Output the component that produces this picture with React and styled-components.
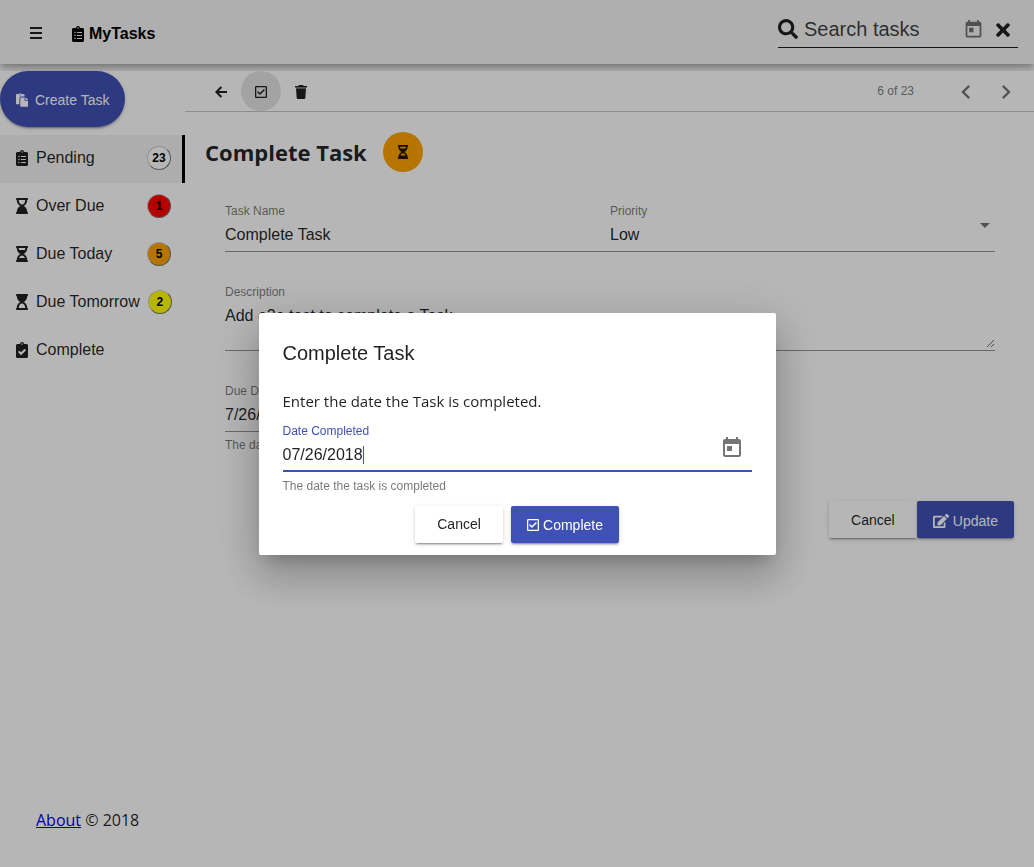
import React from "react";
import styled, { createGlobalStyle, css } from "styled-components";
import {
  FaClipboardList,
  FaClipboardCheck,
  FaHourglassEnd,
  FaHourglassHalf,
  FaHourglassStart,
  FaPaste,
  FaRegCheckSquare,
  FaSearch,
  FaTimes,
  FaEdit,
} from "react-icons/fa";
import { MdToday, MdChevronLeft, MdChevronRight } from "react-icons/md";

const sans = `"Liberation Sans", Arial, sans-serif`;
const humanist = `"Open Sans", "Noto Sans", sans-serif`;
const primary = "#3f51b5";
const ink = "rgba(0, 0, 0, 0.87)";
const muted = "rgba(0, 0, 0, 0.54)";

const GlobalStyle = createGlobalStyle`
  *, *::before, *::after { box-sizing: border-box; }
  body { margin: 0; background: #fff; color: ${ink}; font-family: ${sans}; font-size: 16px; }
  button, input, select, textarea { font-family: inherit; color: inherit; }
  svg { display: block; flex: none; }
`;

const Page = styled.div`
  display: flex;
  flex-direction: column;
  min-height: 100vh;
`;

const TopBar = styled.header`
  display: flex;
  align-items: center;
  height: 64px;
  padding: 0 16px 0 20px;
  background: #f5f5f5;
  box-shadow: 0 3px 5px -1px rgba(0, 0, 0, 0.2), 0 6px 10px rgba(0, 0, 0, 0.14),
    0 1px 18px rgba(0, 0, 0, 0.12);
`;

const IconButton = styled.button`
  display: inline-flex;
  align-items: center;
  justify-content: center;
  width: ${(p) => p.$size || 40}px;
  height: ${(p) => p.$size || 40}px;
  padding: 2px 0 0;
  border: 0;
  border-radius: 50%;
  background: ${(p) => (p.$active ? "#e5e5e5" : "transparent")};
  color: ${(p) => (p.$muted ? muted : ink)};
  cursor: pointer;
`;

const Brand = styled.div`
  display: flex;
  align-items: center;
  gap: 5px;
  margin-left: 20px;
  padding-top: 3px;
  color: #000;
  font-weight: bold;
  svg {
    width: 12px;
    height: 16px;
  }
`;

const SearchBox = styled.form`
  display: flex;
  align-items: center;
  width: 240px;
  height: 40px;
  margin: -8px 0 0 auto;
  padding: 2px 5px 0 0;
  border-bottom: 1px solid #1c1c1c;
`;

const SearchInput = styled.input`
  flex: 1;
  min-width: 0;
  margin-left: 6px;
  padding: 0;
  border: 0;
  outline: 0;
  background: transparent;
  font-size: 20px;
  line-height: 24px;
  &::placeholder {
    color: rgba(0, 0, 0, 0.75);
  }
`;

const SearchAction = styled(IconButton)`
  width: 20px;
  height: 24px;
  margin-left: ${(p) => p.$gap}px;
`;

const Body = styled.div`
  position: relative;
  display: flex;
  flex: 1;
  margin-top: 7px;
  background: #fff;
`;

const Sidebar = styled.aside`
  display: flex;
  flex-direction: column;
  width: 185px;
  flex: none;
`;

const CreateButton = styled.button`
  display: inline-flex;
  align-items: center;
  align-self: flex-start;
  gap: 7px;
  height: 56px;
  padding: 2px 16px 0;
  border: 0;
  border-radius: 28px;
  background: ${primary};
  color: #fff;
  font-size: 14px;
  font-weight: 500;
  box-shadow: 0 3px 1px -2px rgba(0, 0, 0, 0.2), 0 2px 2px rgba(0, 0, 0, 0.14),
    0 1px 5px rgba(0, 0, 0, 0.12);
  cursor: pointer;
  svg {
    width: 12px;
    height: 14px;
  }
`;

const Nav = styled.nav`
  margin-top: 8px;
`;

const NavItem = styled.a`
  display: flex;
  align-items: center;
  gap: 8px;
  height: 48px;
  padding: 0 11px 2px 16px;
  border-right: 3px solid ${(p) => (p.$active ? "#000" : "transparent")};
  background: ${(p) => (p.$active ? "#f3f3f3" : "transparent")};
  color: ${ink};
  text-decoration: none;
  white-space: nowrap;
  svg {
    width: 12px;
    height: 16px;
  }
`;

const Badge = styled.span`
  display: flex;
  align-items: center;
  justify-content: center;
  width: 24px;
  height: 24px;
  margin-left: auto;
  flex: none;
  border: 1px outset #ccc;
  border-radius: 50%;
  background: ${(p) => p.$color};
  color: #000;
  font-size: 12px;
  font-weight: bold;
`;

const Footer = styled.footer`
  margin-top: auto;
  padding: 0 0 35px 36px;
  font-family: ${humanist};
  font-size: 16px;
  line-height: 24px;
  a {
    color: #0000ee;
  }
`;

const Main = styled.main`
  flex: 1;
  min-width: 0;
`;

const Toolbar = styled.div`
  display: flex;
  align-items: center;
  height: 41px;
  padding: 0 8px 0 16px;
  border-bottom: 1px solid #c8c8c8;
`;

const Counter = styled.span`
  margin: 0 32px 0 auto;
  color: ${muted};
  font-size: 12px;
`;

const Detail = styled.section`
  padding: 20px;
`;

const TitleRow = styled.div`
  display: flex;
  align-items: center;
  gap: 16px;
  height: 40px;
  margin-bottom: 31px;
`;

const Title = styled.h1`
  margin: 0;
  font-family: ${humanist};
  font-size: 22px;
  line-height: 32px;
  font-weight: bold;
`;

const StatusDot = styled.span`
  display: flex;
  align-items: center;
  justify-content: center;
  width: 40px;
  height: 40px;
  border-radius: 50%;
  background: #ffa500;
`;

const Form = styled.form`
  display: flex;
  flex-direction: column;
  gap: 32px;
  padding: 0 19px 0 20px;
`;

const FormRow = styled.div`
  display: grid;
  grid-template-columns: 1fr 1fr;
`;

const Field = styled.div`
  display: flex;
  flex-direction: column;
  min-width: 0;
`;

const Label = styled.label`
  color: ${(p) => (p.$focused ? primary : muted)};
  font-size: 12px;
  line-height: 16px;
`;

const Line = styled.div`
  display: flex;
  align-items: center;
  padding-bottom: ${(p) => (p.$focused ? 1 : 2)}px;
  border-bottom: ${(p) => (p.$focused ? `2px solid ${primary}` : "1px solid #949494")};
`;

const controlStyle = css`
  width: 100%;
  min-width: 0;
  margin: 0;
  padding: 0;
  border: 0;
  outline: 0;
  background: transparent;
  font-size: 16px;
`;

const TextInput = styled.input`
  ${controlStyle}
  height: 30px;
  padding-top: 2px;
`;

const DateInput = styled(TextInput)`
  width: auto;
  height: 18px;
  margin: 7px 0 5px;
  padding-top: 0;
  field-sizing: content;
  border-right: 1px solid ${primary};
  caret-color: transparent;
`;

const Select = styled.select`
  ${controlStyle}
  height: 30px;
  appearance: none;
`;

const TextArea = styled.textarea`
  ${controlStyle}
  display: block;
  height: 48px;
  padding-top: 4px;
  line-height: 24px;
  resize: vertical;
  overflow: hidden;
`;

const SelectArrow = styled.svg`
  margin: -18px 5px 0 -15px;
  fill: ${muted};
  pointer-events: none;
`;

const Hint = styled.div`
  margin-top: ${(p) => p.$gap}px;
  color: ${muted};
  font-size: 12px;
  line-height: 16px;
`;

const Actions = styled.div`
  display: flex;
  justify-content: ${(p) => p.$align};
  gap: ${(p) => p.$gap}px;
  margin-top: ${(p) => p.$top}px;
`;

const Button = styled.button`
  display: inline-flex;
  align-items: center;
  justify-content: center;
  gap: 4px;
  min-width: 88px;
  height: 37px;
  padding: ${(p) => (p.$primary ? "2px 16px 0" : "0 16px")};
  border: 0;
  border-radius: 2px;
  background: ${(p) => (p.$primary ? primary : "#fff")};
  color: ${(p) => (p.$primary ? "#fff" : ink)};
  font-size: 14px;
  font-weight: 500;
  box-shadow: 0 3px 1px -2px rgba(0, 0, 0, 0.2), 0 2px 2px rgba(0, 0, 0, 0.14),
    0 1px 5px rgba(0, 0, 0, 0.12);
  cursor: pointer;
`;

const CheckIcon = styled(FaRegCheckSquare)`
  width: 12px;
  height: 14px;
`;

const Backdrop = styled.div`
  position: fixed;
  inset: 0;
  display: flex;
  align-items: center;
  justify-content: center;
  background: rgba(0, 0, 0, 0.288);
`;

const Dialog = styled.section`
  width: 50%;
  padding: 24px 24px 12px;
  border-radius: 2px;
  background: #fff;
  box-shadow: 0 11px 15px -7px rgba(0, 0, 0, 0.2), 0 24px 38px 3px rgba(0, 0, 0, 0.14),
    0 9px 46px 8px rgba(0, 0, 0, 0.12);
`;

const DialogTitle = styled.h2`
  margin: 0 0 20px;
  font-size: 20px;
  line-height: 32px;
  font-weight: normal;
`;

const DialogText = styled.p`
  margin: 0 0 10px;
  font-family: ${humanist};
  font-size: 15px;
  line-height: 24px;
`;

const PickerButton = styled(IconButton)`
  width: 24px;
  height: 24px;
  margin: -14px 8px 0 auto;
`;

const MenuIcon = () => (
  <svg width="12" height="12" viewBox="0 0 12 12" fill="currentColor">
    <path d="M0 0h12v2H0zM0 5h12v2H0zM0 10h12v2H0z" />
  </svg>
);

const BackIcon = () => (
  <svg width="12" height="12" viewBox="0 0 12 12" fill="none" stroke="currentColor" strokeWidth="2">
    <path d="M12 6H1.600M6.400 1L1.400 6l5 5" />
  </svg>
);

const TrashIcon = () => (
  <svg width="12" height="14" viewBox="0 0 12 14" fill="currentColor">
    <path d="M4 0h4l.7 1H12v1.600H0V1h3.300z" />
    <path d="M1 2.600h10v1H1z" opacity="0.5" />
    <path d="M1 3.600h10l-.7 9.400q-.1 1-1 1H2.700q-.900 0-1-1z" />
  </svg>
);

const navItems = [
  { label: "Pending", Icon: FaClipboardList, count: 23, color: "#fff", active: true },
  { label: "Over Due", Icon: FaHourglassEnd, count: 1, color: "#ff0000" },
  { label: "Due Today", Icon: FaHourglassHalf, count: 5, color: "#ffa500" },
  { label: "Due Tomorrow", Icon: FaHourglassStart, count: 2, color: "#ffff00" },
  { label: "Complete", Icon: FaClipboardCheck },
];

export default function App() {
  return (
    <>
      <GlobalStyle />
      <Page>
        <TopBar>
          <IconButton $size={32} aria-label="Menu">
            <MenuIcon />
          </IconButton>
          <Brand>
            <FaClipboardList />
            MyTasks
          </Brand>
          <SearchBox role="search">
            <FaSearch size={20} />
            <SearchInput type="text" placeholder="Search tasks" aria-label="Search tasks" />
            <SearchAction type="button" $gap={8} $muted aria-label="Pick a date">
              <MdToday size={21} />
            </SearchAction>
            <SearchAction type="button" $gap={10} aria-label="Clear search">
              <FaTimes size={20} />
            </SearchAction>
          </SearchBox>
        </TopBar>

        <Body>
          <Sidebar>
            <CreateButton type="button">
              <FaPaste />
              Create Task
            </CreateButton>
            <Nav>
              {navItems.map(({ label, Icon, count, color, active }) => (
                <NavItem key={label} href="#" $active={active}>
                  <Icon />
                  {label}
                  {count && <Badge $color={color}>{count}</Badge>}
                </NavItem>
              ))}
            </Nav>
            <Footer>
              <a href="#about">About</a> © 2018
            </Footer>
          </Sidebar>

          <Main>
            <Toolbar>
              <IconButton aria-label="Back">
                <BackIcon />
              </IconButton>
              <IconButton $active aria-label="Complete task">
                <CheckIcon />
              </IconButton>
              <IconButton aria-label="Delete task">
                <TrashIcon />
              </IconButton>
              <Counter>6 of 23</Counter>
              <IconButton $muted aria-label="Previous task">
                <MdChevronLeft size={28} />
              </IconButton>
              <IconButton $muted aria-label="Next task">
                <MdChevronRight size={28} />
              </IconButton>
            </Toolbar>

            <Detail>
              <TitleRow>
                <Title>Complete Task</Title>
                <StatusDot>
                  <FaHourglassHalf size={14} />
                </StatusDot>
              </TitleRow>
              <Form>
                <FormRow>
                  <Field>
                    <Label htmlFor="name">Task Name</Label>
                    <Line>
                      <TextInput id="name" defaultValue="Complete Task" />
                    </Line>
                  </Field>
                  <Field>
                    <Label htmlFor="priority">Priority</Label>
                    <Line>
                      <Select id="priority" defaultValue="Low">
                        <option>Low</option>
                        <option>Normal</option>
                        <option>High</option>
                      </Select>
                      <SelectArrow width="10" height="5" viewBox="0 0 10 5">
                        <path d="M0 0h10L5 5z" />
                      </SelectArrow>
                    </Line>
                  </Field>
                </FormRow>
                <Field>
                  <Label htmlFor="description">Description</Label>
                  <Line>
                    <TextArea id="description" defaultValue="Add e2e test to complete a Task" />
                  </Line>
                </Field>
                <FormRow>
                  <Field>
                    <Label htmlFor="due">Due Date</Label>
                    <Line>
                      <TextInput id="due" defaultValue="7/26/2018" />
                    </Line>
                    <Hint $gap={5}>The date the task is due</Hint>
                  </Field>
                </FormRow>
              </Form>
              <Actions $align="flex-end" $gap={0} $top={48}>
                <Button type="button">Cancel</Button>
                <Button type="button" $primary>
                  <FaEdit size={16} />
                  Update
                </Button>
              </Actions>
            </Detail>
          </Main>
        </Body>
      </Page>

      <Backdrop>
        <Dialog role="dialog" aria-modal="true" aria-labelledby="dialog-title">
          <DialogTitle id="dialog-title">Complete Task</DialogTitle>
          <DialogText>Enter the date the Task is completed.</DialogText>
          <Field>
            <Label htmlFor="completed" $focused>
              Date Completed
            </Label>
            <Line $focused>
              <DateInput id="completed" defaultValue="07/26/2018" />
              <PickerButton type="button" $muted aria-label="Open calendar">
                <MdToday size={24} />
              </PickerButton>
            </Line>
            <Hint $gap={6}>The date the task is completed</Hint>
          </Field>
          <Actions $align="center" $gap={8} $top={12}>
            <Button type="button">Cancel</Button>
            <Button type="button" $primary>
              <CheckIcon />
              Complete
            </Button>
          </Actions>
        </Dialog>
      </Backdrop>
    </>
  );
}
